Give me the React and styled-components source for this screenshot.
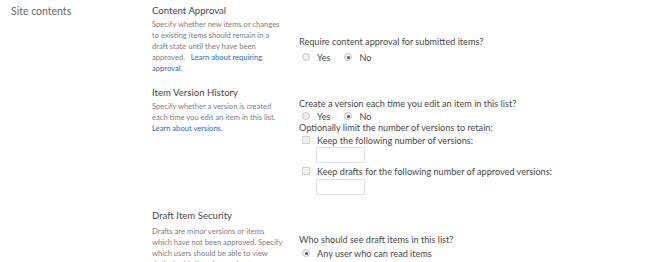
import React from 'react';
import styled, { createGlobalStyle } from 'styled-components';

const Global = createGlobalStyle`
  body { margin: 0; background: #fff; font-family: Lato, "Open Sans", sans-serif; color: #444; }
`;

const Page = styled.div`
  display: flex;
  width: 650px;
  height: 262px;
  overflow: hidden;
`;

const Nav = styled.div`
  width: 141px;
  padding: 5px 0 0 11px;
  font-size: 10.5px;
  line-height: 12px;
  color: #6a6a6a;
`;

const Main = styled.div`
  display: flex;
  flex-direction: column;
`;

const Section = styled.div`
  display: flex;
  flex: none;
  height: ${p => p.h}px;
`;

const Desc = styled.div`
  width: 147px;
  padding-top: 5px;
`;

const Title = styled.div`
  font-size: 9.6px;
  line-height: 12px;
  color: #4a4a4a;
  margin-bottom: ${p => p.gap || 2}px;
`;

const Text = styled.div`
  width: 134px;
  font-size: 7.6px;
  line-height: 11px;
  color: #808080;
  a { color: #2a6ebb; text-decoration: none; }
`;

const Controls = styled.div`
  padding-top: ${p => p.top}px;
  font-size: 9.15px;
  color: #4a4a4a;
`;

const Line = styled.div`
  height: ${p => p.h || 12}px;
  display: flex;
  align-items: center;
  white-space: nowrap;
  padding-left: ${p => p.indent || 0}px;
`;

const Radio = styled.span`
  width: 6px;
  height: 6px;
  border-radius: 50%;
  border: 1px solid #c6c6c6;
  background: #f0f0f0;
  display: inline-flex;
  align-items: center;
  justify-content: center;
  margin-right: 7px;
  &::after {
    content: '';
    width: 3px;
    height: 3px;
    border-radius: 50%;
    background: ${p => (p.on ? '#555' : 'transparent')};
  }
`;

const Check = styled.span`
  width: 6px;
  height: 6px;
  border: 1px solid #cfcfcf;
  background: #f2f2f2;
  display: inline-block;
  margin-right: 7px;
`;

const Option = styled.span`
  display: inline-flex;
  align-items: center;
  margin-right: 14px;
`;

const Input = styled.div`
  width: 47px;
  height: 14px;
  border: 1px solid #e1e1e1;
  margin-left: 17px;
`;

export default function App() {
  return (
    <Page>
      <Global />
      <Nav>Site contents</Nav>
      <Main>
        <Section h={82}>
          <Desc>
            <Title>Content Approval</Title>
            <Text>
              Specify whether new items or changes to existing items should remain in a draft state until they have been approved.&nbsp;&nbsp; <a href="#">Learn about requiring approval.</a>
            </Text>
          </Desc>
          <Controls top={32}>
            <Line h={19}>Require content approval for submitted items?</Line>
            <Line indent={3}>
              <Option><Radio />Yes</Option>
              <Option><Radio on />No</Option>
            </Line>
          </Controls>
        </Section>
        <Section h={123}>
          <Desc>
            <Title>Item Version History</Title>
            <Text>
              Specify whether a version is created each time you edit an item in this list. <a href="#">Learn about versions.</a>
            </Text>
          </Desc>
          <Controls top={15}>
            <Line h={13}>Create a version each time you edit an item in this list?</Line>
            <Line indent={3}>
              <Option><Radio />Yes</Option>
              <Option><Radio on />No</Option>
            </Line>
            <Line h={11}>Optionally limit the number of versions to retain:</Line>
            <Line h={14} indent={3}><Check />Keep the following number of versions:</Line>
            <Input />
            <Line h={16} indent={3}><Check />Keep drafts for the following number of approved versions:</Line>
            <Input />
          </Controls>
        </Section>
        <Section h={57}>
          <Desc>
            <Title gap={4}>Draft Item Security</Title>
            <Text>
              Drafts are minor versions or items<br />
              which have not been approved. Specify<br />
              which users should be able to view<br />
              drafts in this list.&nbsp;&nbsp; <a href="#">Learn about</a>
            </Text>
          </Desc>
          <Controls top={28}>
            <Line h={13}>Who should see draft items in this list?</Line>
            <Line h={14} indent={3}>
              <Option><Radio on />Any user who can read items</Option>
            </Line>
          </Controls>
        </Section>
      </Main>
    </Page>
  );
}
